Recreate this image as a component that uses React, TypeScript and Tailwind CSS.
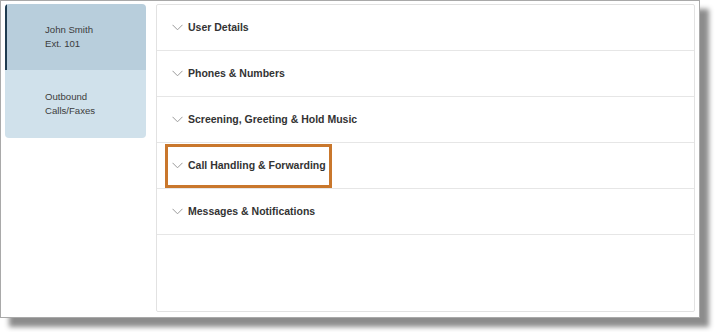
const sections = [
  "User Details",
  "Phones & Numbers",
  "Screening, Greeting & Hold Music",
  "Call Handling & Forwarding",
  "Messages & Notifications",
];

function Chevron() {
  return (
    <svg width="11" height="7" viewBox="0 0 11 7" className="shrink-0">
      <polyline points="0.5,0.8 5.5,5.8 10.5,0.8" fill="none" stroke="#9a9a9a" strokeWidth="1" />
    </svg>
  );
}

export default function App() {
  return (
    <div className="w-[715px] h-[332px] bg-white font-['Liberation_Sans',Arial,sans-serif]">
      <div className="w-[700px] h-[318px] bg-white border border-[#a9a9a9] shadow-[9px_9px_5px_rgba(0,0,0,0.45)] px-[4px] pt-[3px] pb-[5px] flex gap-[10px] items-start">
        {/* sidebar */}
        <div className="w-[141px] rounded-[4px] overflow-hidden text-[9.6px] leading-[14px] text-[#3c3c3c]">
          <div className="h-[66px] bg-[#b8cedc] border-l-2 border-[#1f3c51] pl-[38px] flex flex-col justify-center">
            <span>John Smith</span>
            <span>Ext. 101</span>
          </div>
          <div className="h-[68px] bg-[#d0e1eb] pl-[40px] flex flex-col justify-center">
            <span>Outbound</span>
            <span>Calls/Faxes</span>
          </div>
        </div>

        {/* accordion panel */}
        <div className="flex-1 h-full border border-[#e2e2e2] rounded-[2px]">
          {sections.map((s, i) => (
            <div key={s} className="relative h-[46px] border-b border-[#e6e6e6] flex items-center gap-[5px] pl-[15px]">
              <Chevron />
              <span className="text-[10.5px] font-bold text-[#333333]">{s}</span>
              {i === 3 && (
                <div className="absolute left-[8px] top-[1px] w-[167px] h-[44px] border-[3px] border-[#c9772c]" />
              )}
            </div>
          ))}
        </div>
      </div>
    </div>
  );
}
